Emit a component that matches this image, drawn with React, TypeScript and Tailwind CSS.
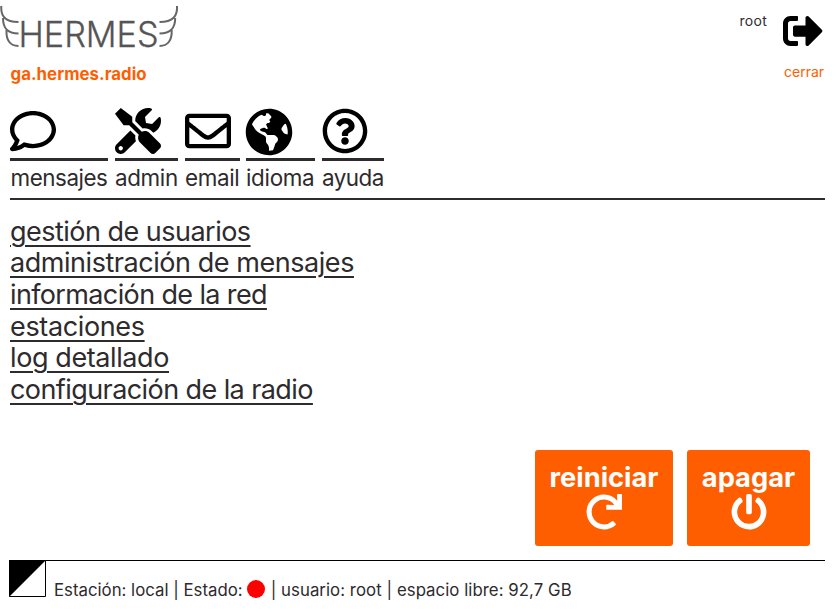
import React from 'react';
import { FaRegComment, FaTools, FaRegEnvelope, FaRegQuestionCircle, FaSignOutAlt, FaPowerOff, FaRedo, FaGlobeAmericas } from 'react-icons/fa';

const navItems = [
  { label: 'mensajes', Icon: FaRegComment, box: 'w-[98px] mr-[7px]', size: 'size-[46px]', text: 'tracking-[-0.45px] pl-[0.5px]' },
  { label: 'admin', Icon: FaTools, box: 'w-[63px] mr-[7px]', size: 'size-[46px]', text: 'tracking-[-0.35px]' },
  { label: 'email', Icon: FaRegEnvelope, box: 'w-[55px] mr-[6px]', size: 'size-[46px]', text: 'tracking-[-0.35px]' },
  { label: 'idioma', Icon: FaGlobeAmericas, box: 'w-[69px] mr-[7px]', size: 'size-[48px] -ml-px', text: 'tracking-[-0.3px]' },
  { label: 'ayuda', Icon: FaRegQuestionCircle, box: 'w-[62px]', size: 'size-[46px]', text: 'tracking-[-0.5px]' },
];

const links = [
  { label: 'gestión de usuarios', row: 'h-[31px]', text: 'tracking-[-0.52px]' },
  { label: 'administración de mensajes', row: 'h-8', text: 'tracking-[-0.45px]' },
  { label: 'información de la red', row: 'h-8', text: 'tracking-[-0.63px]' },
  { label: 'estaciones', row: 'h-[31px]', text: 'tracking-[-0.36px]' },
  { label: 'log detallado', row: 'h-8', text: 'tracking-[-0.4px]' },
  { label: 'configuración de la radio', row: 'h-8', text: 'tracking-[-0.58px]' },
];

function Logo() {
  return (
    <svg className="block h-[54px] w-[180px]" viewBox="0 0 180 54" fill="none">
      <text x="18.5" y="46.5" textLength="140" lengthAdjust="spacingAndGlyphs" fill="#555" stroke="#555" strokeWidth="0.3" className="font-['Inter',sans-serif] text-[35px] font-light">
        HERMES
      </text>
      <g stroke="#666" strokeWidth="2">
        <path d="M1.3 6C.6 16 5 22 18.5 22M3 18C3 28 7 33.5 18.5 33.5M6.5 30C6 40 10 46 18.5 46" />
        <path d="M177 6C177.7 16 173 22 159.5 22M175.2 18C175.2 28 171 33.5 159.5 33.5M171.7 30C172.2 40 168 46 159.5 46" />
      </g>
    </svg>
  );
}

export default function App() {
  return (
    <div className="h-[611px] w-[833px] overflow-hidden bg-white pr-2 font-['Inter',sans-serif] whitespace-nowrap text-[#2d2b2d]">
      <header className="flex h-[108px] justify-between">
        <div>
          <Logo />
          <div className="pt-2 pl-[10.5px] text-[16.8px] leading-6 font-bold tracking-[0.05px] text-[#ff5e00]">ga.hermes.radio</div>
        </div>
        <div className="flex gap-4">
          <div className="pt-3 text-[14px] leading-[18px] tracking-[0.25px]">root</div>
          <div className="w-[42px]">
            <FaSignOutAlt className="mt-[11px] size-10 text-black" />
            <div className="pt-3 pl-px text-[14px] leading-[18px] text-[#ff5e00]">cerrar</div>
          </div>
        </div>
      </header>
      <nav className="ml-[10px] flex h-[92px] border-b-2 border-[#2d2b2d]">
        {navItems.map(({ label, Icon, box, size, text }) => (
          <a key={label} className={box}>
            <div className="h-[53px] border-b-3 border-[#2d2b2d] text-black">
              <Icon className={size} />
            </div>
            <div className={`text-[22.4px] leading-[34px] ${text}`}>{label}</div>
          </a>
        ))}
      </nav>
      <main className="h-[250px] pt-4 pl-[10px]">
        {links.map(({ label, row, text }) => (
          <div key={label} className={row}>
            <a className={`text-[27px] leading-[31px] underline decoration-2 underline-offset-[4px] ${text}`}>{label}</a>
          </div>
        ))}
      </main>
      <div className="flex h-[110px] justify-end gap-[14px] pr-[15px] font-bold text-white">
        <button className="flex h-24 w-[138px] flex-col items-center rounded-[3px] bg-[#ff5e00] pt-3">
          <span className="text-[27.3px] leading-8">reiniciar</span>
          <FaRedo className="size-9" />
        </button>
        <button className="flex h-24 w-[123px] flex-col items-center rounded-[3px] bg-[#ff5e00] pt-3">
          <span className="text-[27.3px] leading-8">apagar</span>
          <FaPowerOff className="size-9" />
        </button>
      </div>
      <footer className="ml-[9px] flex h-[51px] border-t border-black text-[16.8px] leading-6">
        <svg className="-mt-px mr-2 size-[37px]" viewBox="0 0 37 37">
          <path d="M.5.5h36v36H.5z" fill="white" stroke="black" />
          <path d="M0 0h37L0 37z" fill="black" />
        </svg>
        <div className="flex pt-[17px]">
          <span>Estación: local | Estado:</span>
          <span className="mt-[2px] mr-[6px] ml-[4px] size-[18px] rounded-full bg-[#f00]" />
          <span className="tracking-[0.05px]">| usuario: root | espacio libre: 92,7 GB</span>
        </div>
      </footer>
    </div>
  );
}
